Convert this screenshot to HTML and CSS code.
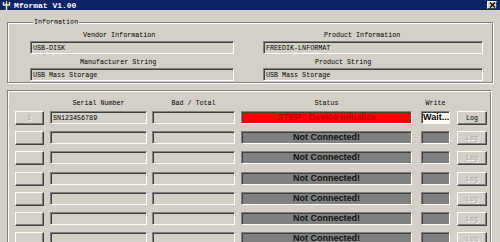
FILE: index.html
```html
<!DOCTYPE html>
<html lang="en">
<head>
  <meta charset="UTF-8">
  <title>Mformat V1.00</title>
  <link rel="stylesheet" href="styles.css">
</head>
<body>
  <div class="titlebar">
    <svg class="app-icon" width="9" height="9" viewBox="0 0 9 9">
      <path d="M4.5 2v7M1.5 1v3h6V1" stroke="#f4f0c0" stroke-width="1.4" fill="none"/>
      <path d="M4.5 0v2" stroke="#e0c040" stroke-width="1.4"/>
    </svg>
    <span class="title">Mformat V1.00</span>
    <span class="close">
      <svg width="7" height="6" viewBox="0 0 7 6">
        <path d="M1 0.5l5 5M6 0.5l-5 5" stroke="#000" stroke-width="1.3"/>
      </svg>
    </span>
  </div>

  <fieldset class="info">
    <legend>Information</legend>
    <div class="info-cols">
      <div class="info-col left">
        <div class="field-label" style="padding-left:53px">Vendor Information</div>
        <div class="box">USB-DISK</div>
        <div class="field-label gap" style="padding-left:50px">Manufacturer String</div>
        <div class="box">USB Mass Storage</div>
      </div>
      <div class="info-col right">
        <div class="field-label" style="padding-left:61px">Product Information</div>
        <div class="box">FREEDIK-LNFORMAT</div>
        <div class="field-label gap" style="padding-left:52px">Product String</div>
        <div class="box">USB Mass Storage</div>
      </div>
    </div>
  </fieldset>

  <div class="ports">
    <div class="port-row head">
      <span class="c-btn"></span>
      <span class="c-serial">Serial Number</span>
      <span class="c-bad">Bad / Total</span>
      <span class="c-status">Status</span>
      <span class="c-write">Write</span>
      <span class="c-log"></span>
    </div>
    <div id="portList"></div>
  </div>

  <script>
    // one entry per port slot
    const ports = [
      { serial: "SN123456789", status: "STEP : Device Initialize", write: "Wait...", active: true },
      {}, {}, {}, {}, {}, {}
    ];

    const list = document.getElementById("portList");
    ports.forEach((p, i) => {
      const row = document.createElement("div");
      row.className = "port-row";
      row.innerHTML =
        `<span class="c-btn btn disabled">${i === 0 ? "I" : ""}</span>` +
        `<span class="c-serial box">${p.serial || ""}</span>` +
        `<span class="c-bad box"></span>` +
        `<span class="c-status box status ${p.active ? "busy" : "idle"}">${p.status || "Not Connected!"}</span>` +
        `<span class="c-write box write ${p.active ? "busy" : "idle"}">${p.write || ""}</span>` +
        `<span class="c-log btn ${p.active ? "" : "disabled"}">Log</span>`;
      list.appendChild(row);
    });
  </script>
</body>
</html>
```

FILE: styles.css
```css
body {
  margin: 0;
  width: 500px;
  height: 242px;
  overflow: hidden;
  background: #d4d0c8;
  font-family: "Liberation Mono", "DejaVu Sans Mono", monospace;
  font-size: 6.7px;
  color: #000;
}
.titlebar {
  height: 10px;
  background: #0a246a;
  display: flex;
  align-items: center;
  padding: 0 3px 0 2px;
}
.app-icon {
  display: block;
  margin-right: 3px;
}
.title {
  color: #fff;
  font-weight: bold;
  font-size: 8px;
  flex: 1;
}
.close {
  width: 10px;
  height: 8px;
  background: #d4d0c8;
  border: 1px solid;
  border-color: #fff #404040 #404040 #fff;
  box-sizing: border-box;
  display: flex;
  align-items: center;
  justify-content: center;
}
.close svg {
  display: block;
}

.info {
  margin: 8px 7px 0 7px;
  padding: 5px 8px 1px 22px;
  border: 1px solid #808080;
  box-shadow: inset 1px 1px #fff, 1px 1px #fff;
  min-width: 0;
}
.info legend {
  padding: 0 1px;
  margin-left: 3px;
  line-height: 8px;
}
.info-cols {
  display: flex;
  gap: 29px;
}
.info-col.left {
  width: 204px;
}
.info-col.right {
  width: 220px;
}
.field-label {
  line-height: 8px;
  margin-bottom: 2px;
}
.field-label.gap {
  margin-top: 4px;
}
.box {
  display: block;
  height: 13px;
  box-sizing: border-box;
  border: 1px solid;
  border-color: #808080 #fff #fff #808080;
  box-shadow: inset 1px 1px #404040;
  padding: 1px 0 0 2px;
  line-height: 10px;
  white-space: nowrap;
  overflow: hidden;
}

.ports {
  margin: 7px 8px 0 7px;
  padding: 8px 0 0 7px;
  height: 200px;
  border-top: 1px solid #808080;
  border-left: 1px solid #808080;
  border-right: 1px solid #fff;
  box-shadow: inset 1px 1px #fff, inset -1px 0 #808080;
}
.port-row {
  display: flex;
  height: 14px;
  margin-bottom: 6.2px;
}
.port-row.head {
  height: 8px;
  line-height: 8px;
  margin-bottom: 4px;
}
.head span {
  text-align: center;
}
.c-btn { width: 29px; }
.c-serial { width: 97px; margin-left: 6px; }
.c-bad { width: 83px; margin-left: 5px; }
.c-status { width: 171px; margin-left: 6px; }
.c-write { width: 29px; margin-left: 9px; }
.c-log { width: 30px; margin-left: 7px; }

.port-row .box {
  height: 13px;
}
.btn {
  height: 14px;
  box-sizing: border-box;
  border: 1px solid;
  border-color: #fff #404040 #404040 #fff;
  box-shadow: inset -1px -1px #808080;
  text-align: center;
  line-height: 12px;
}
.btn.disabled {
  color: #a0a0a0;
  text-shadow: 1px 1px #fff;
}
.status {
  font-family: "Liberation Sans", Arial, sans-serif;
  font-weight: bold;
  font-size: 9px;
  text-align: center;
  padding: 0;
  line-height: 11px;
}
.status.idle {
  background: #808080;
  color: #111;
}
.status.busy {
  background: #ff0000;
  color: #b00000;
}
.write.idle {
  background: #808080;
}
.write.busy {
  background: #fcfcf2;
  font-family: "Liberation Sans", Arial, sans-serif;
  font-weight: bold;
  font-size: 9px;
  line-height: 11px;
  padding: 0 0 0 1px;
}
```
